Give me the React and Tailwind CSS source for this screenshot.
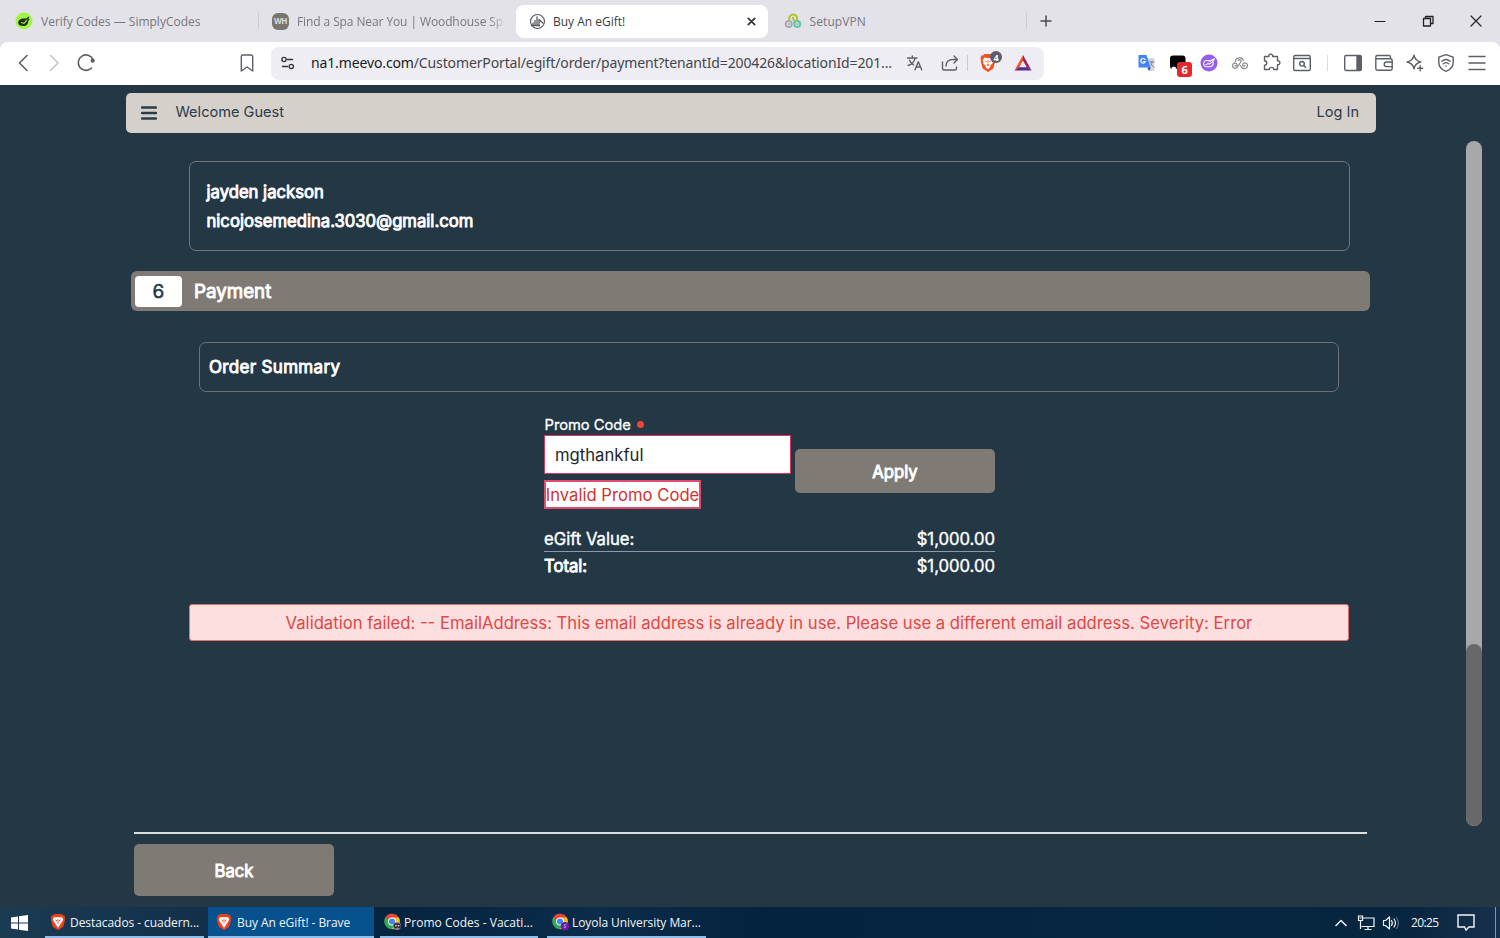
import React from "react";

function Icon({ w = 20, h = 20, className = "", children }) {
  return (
    <svg
      width={w}
      height={h}
      viewBox={`0 0 ${w} ${h}`}
      fill="none"
      stroke="currentColor"
      strokeWidth="1.4"
      strokeLinecap="round"
      strokeLinejoin="round"
      className={"block shrink-0 " + className}
    >
      {children}
    </svg>
  );
}

const gauge = (
  <g stroke="none">
    <path d="M3.200 11c0-2.800 2.300-4.500 5.300-4.500h2.500L14.500 4l-1 3 1.300.3-1.500 1.700c0 3-2 5-5 5-3.200 0-5.100-1.200-5.100-3z" fill="#20301a" />
    <path d="M6.500 10.500l2.300 1L12 7.800" stroke="#8fdc3c" strokeWidth="1.200" fill="none" />
  </g>
);

function VpnMark({ colored }) {
  const a = colored ? "#b4c02c" : "#86888c";
  const b = colored ? "#a9adb0" : "#86888c";
  const c = colored ? "#5cc8a0" : "#86888c";
  return (
    <Icon w={18} h={18}>
      {colored ? (
        <g strokeWidth="2">
          <path d="M5.500 7.500a4 3.600 0 1 1 7.200.5" stroke={a} />
          <path d="M9 5.800l1.500 4" stroke={a} />
          <circle cx="4.700" cy="12" r="3" stroke={b} />
          <circle cx="13.200" cy="12" r="3" stroke={c} />
          <circle cx="4.700" cy="12" r="0.500" stroke={b} strokeWidth="1" />
          <circle cx="13.200" cy="12" r="0.500" stroke={c} strokeWidth="1" />
        </g>
      ) : (
        <g strokeWidth="1.200" stroke={a}>
          <path d="M4.500 7.500C4.500 3 11 2.500 12.500 6.500" />
          <path d="M7.300 6.500c1.200-1.500 3.200-.5 2.700 1L6.500 13c-1.300 2-5 1.500-5-1.300 0-3 4-3.500 4.600-1 .3 1.500-1.900 2-2.100.6" />
          <path d="M9.300 11.500l1.500 2c1.800 2 5.700 1.200 5.700-1.800 0-3.200-4.300-3.700-4.800-1-.3 1.600 2 2 2.200.6" />
        </g>
      )}
    </Icon>
  );
}

function BraveLion({ className = "" }) {
  return (
    <Icon w={16} h={20} className={className}>
      <g stroke="none">
        <path d="M4.500 1h7l1.500 1.500 1.500-.2L15.500 5l-.5 2 .3 1-2 7.500L8 19l-5.300-3.500L.7 8 1 7 .5 5l1-2.700L3 2.500z" fill="#f4511e" />
        <path d="M4.500 4.500L8 5.200l3.500-.7 1.800 2.200-.8 2 .3 1.300-2.600 2.600.3 1.200L8 16.300l-2.500-2 .3-1.200L3.200 10.500l.3-1.300-.8-2z" fill="#fff" />
        <path d="M4.500 7.500l2.300.5-.3 1.200zM11.500 7.500l-2.300.5.3 1.200zM6.300 12l1.700-.9 1.700.9L8 13zM7.600 7.500h.8v3h-.8z" fill="#f4511e" />
      </g>
    </Icon>
  );
}

function BraveTaskIcon() {
  return (
    <Icon w={16} h={18}>
      <g stroke="none">
        <path d="M4.500 1h7L13 2.300l1.200-.1 1 2.300-.4 1.800.2.900-1.800 6.600L8 17.200l-5.200-3.400L1 7.200l.2-.9-.4-1.800 1-2.300 1.200.1z" fill="#e8431c" />
        <path d="M4 4.200h8l1.200 2-.7 1.800-2.300 3.500L8 15l-2.200-3.500L3.500 8l-.7-1.800z" fill="#fff" />
        <path d="M5 6.500L7 7.200l-.4 1.500zM11 6.500L9 7.200l.4 1.500zM7.600 6h.8v4.300L8 12l-.4-1.700z" fill="#e8431c" />
      </g>
    </Icon>
  );
}

function ChromeMark({ variant }) {
  return (
    <Icon w={18} h={18}>
      <g stroke="none">
        <circle cx="8" cy="8.500" r="7.800" fill="#34a853" />
        <path d="M8 8.500L1.250 4.600A7.800 7.800 0 0 1 14.750 4.600z" fill="#ea4335" />
        <path d="M8 4.600h6.750A7.800 7.800 0 0 1 8 16.300l3.400-5.850z" fill="#fbc116" />
        <circle cx="8" cy="8.500" r="3.900" fill="#fff" />
        <circle cx="8" cy="8.500" r="3.100" fill="#4285f4" />
        {variant === "purple" ? (
          <>
            <circle cx="13" cy="13.300" r="4.300" fill="#6a1fa0" />
            <path d="M14 11.700c-1.800-.7-2.500.8-1 1.400s.8 2-1 1.300" fill="none" stroke="#d9b8ef" strokeWidth="0.800" />
          </>
        ) : (
          <>
            <circle cx="13" cy="13" r="4" fill="#8d8494" />
            <path d="M9.500 12l1.500-1.800h4L16.500 12l.5 2.200-1.500 1.300-2-1-2 1-1.500-1.300z" fill="#31293a" />
            <circle cx="12" cy="12.800" r="0.800" fill="#fff" />
            <circle cx="14.500" cy="12.800" r="0.800" fill="#fff" />
          </>
        )}
      </g>
    </Icon>
  );
}

function TabStrip() {
  return (
    <div className="flex h-[42px] w-full bg-[#e3e2e8] text-[12px] text-[#77777d] font-['Open_Sans','Noto_Sans',sans-serif]">
      <div className="flex h-full w-[258px] items-center pl-[15px]">
        <Icon w={18} h={18} className="mr-2">
          <circle cx="9" cy="9" r="8.500" fill="#a3f54a" stroke="none" />
          {gauge}
        </Icon>
        <span className="mt-px whitespace-nowrap">Verify Codes — SimplyCodes</span>
      </div>
      <div className="my-[13px] w-px bg-[#cccbd2]" />
      <div className="flex h-full w-[257px] items-center pl-[13px]">
        <div className="mr-2 flex h-[17px] w-[17px] items-center justify-center rounded-[6px] bg-[#77756d] text-[8px] font-bold tracking-[-0.5px] text-[#dcdcd8]">WH</div>
        <div className="mt-px w-[208px] whitespace-nowrap tracking-[-0.1px] [mask-image:linear-gradient(to_right,#000_92%,transparent_101%)]">
          Find a Spa Near You | Woodhouse Sp
        </div>
      </div>
      <div className="mt-[5px] flex h-[33px] w-[252px] items-center rounded-[8px] bg-white pl-[13px] pr-[10px] text-[#3b3b40]">
        <Icon w={17} h={17} className="mr-[7px] text-[#55585c]">
          <circle cx="8.500" cy="8.500" r="7" strokeWidth="1.100" />
          <path d="M4 12V9.500M6 12.500V7M8 12.500V3.500M10 13V6.500l4.500 4M2 12.500h9" strokeWidth="1.300" strokeLinecap="butt" />
        </Icon>
        <span className="flex-1 whitespace-nowrap">Buy An eGift!</span>
        <Icon w={13} h={13} className="text-[#333]">
          <path d="M3.300 3.300l6.400 6.400M9.700 3.300l-6.400 6.400" strokeWidth="1.700" />
        </Icon>
      </div>
      <div className="flex h-full w-[258px] items-center pl-[16px]">
        <VpnMark colored />
        <span className="ml-[7.500px] mt-px tracking-[0.1px]">SetupVPN</span>
      </div>
      <div className="my-[13px] w-px bg-[#cccbd2]" />
      <div className="flex items-center pl-3 text-[#4b4b50]">
        <Icon w={14} h={14}>
          <path d="M7 2v10M2 7h10" strokeWidth="1.500" />
        </Icon>
      </div>
      <div className="ml-auto flex items-center text-[#222]">
        <div className="flex w-12 justify-center">
          <Icon w={12} h={12}><path d="M1 6.500h10" strokeWidth="1.200" /></Icon>
        </div>
        <div className="flex w-12 justify-center">
          <Icon w={12} h={12}>
            <path d="M1.500 3.500h7V11h-7zM3.500 3.500V1.500h7.500v7H8.500" strokeWidth="1.300" />
          </Icon>
        </div>
        <div className="flex w-12 justify-center">
          <Icon w={12} h={12}><path d="M1 1l10 10M11 1L1 11" strokeWidth="1.200" /></Icon>
        </div>
      </div>
    </div>
  );
}

function ExtensionButtons() {
  const cell = "relative flex w-[31.2px] shrink-0 justify-center";
  return (
    <div className="flex h-full items-center text-[#5d5f66]">
      <div className={cell}>
        <Icon w={18} h={18}>
          <g stroke="none">
            <path d="M7 4h9.500v13H10z" fill="#d5d9de" />
            <path d="M0.500 1h8l4 12.500H0.500z" fill="#4285f4" />
            <path d="M9.500 13.500H13L11 17z" fill="#2a56b5" />
          </g>
          <path d="M7 5.500A2.300 2.300 0 1 0 7.300 7.500H5.500" stroke="#fff" strokeWidth="1.200" />
          <path d="M11.500 8H16M14 7v1c0 2-1 3-2 4M13 10l3 3.500" stroke="#7b8794" strokeWidth="1" />
        </Icon>
      </div>
      <div className={cell}>
        <Icon w={18} h={18}>
          <rect x="1" y="1.500" width="15.500" height="13.500" rx="3" fill="#050505" stroke="none" />
          <path d="M2.500 15c0-3.500 4.500-3.500 5 0zM8 15c0-3.500 4.500-3.500 5 0z" fill="#fff" stroke="none" />
        </Icon>
        <div className="absolute left-[15px] top-[8px] flex h-[15px] w-[15px] items-center justify-center rounded-[3px] bg-[#e5282c] text-[11px] font-bold leading-none text-white font-['Open_Sans',sans-serif]">6</div>
      </div>
      <div className={cell}>
        <Icon w={18} h={18}>
          <circle cx="9" cy="9" r="8.500" fill="#925ff0" stroke="none" />
          <path d="M10.500 6.500H7C4.500 6.500 3.300 8.500 3.700 10.500c.3 1.600 1.500 2.300 3.300 2.300h2.500c2.500 0 3.800-1.500 3.700-4.300M9 7.500l5.500-2.800-2 3-3 2.500-2-1M6 10.500h1" stroke="#fff" strokeWidth="1.100" />
        </Icon>
      </div>
      <div className={cell}><VpnMark /></div>
      <div className={cell}>
        <Icon>
          <path d="M3 4h4.300c-.5-3 4.400-3 3.900 0H16v4.300c3.200-.4 3.200 4.300 0 3.900V17h-3.800c0-2.800-4.400-2.800-4.400 0H3v-4.300c3 0 3-4.400 0-4.400z" transform="translate(0.500 -0.500)" />
        </Icon>
      </div>
      <div className={cell}>
        <Icon>
          <rect x="1.700" y="2.500" width="16.600" height="15" rx="1.500" />
          <path d="M2 5.500h16M11.700 12.500l2 2" />
          <circle cx="10" cy="10.800" r="2.300" />
        </Icon>
      </div>
      <div className="mx-[9px] h-4 w-px bg-[#d9d9de]" />
      <div className={cell}>
        <Icon>
          <rect x="1.700" y="2.500" width="16.600" height="15" rx="1.500" />
          <path d="M14 3h3a1 1 0 0 1 1 1v12a1 1 0 0 1-1 1h-3z" fill="currentColor" />
        </Icon>
      </div>
      <div className={cell}>
        <Icon>
          <path d="M16.500 5.700V4.200A1.700 1.700 0 0 0 14.800 2.500H3.500A1.700 1.700 0 0 0 1.800 4.200v11.300a1.700 1.700 0 0 0 1.700 1.700h13a1.700 1.700 0 0 0 1.700-1.700V7.400a1.700 1.700 0 0 0-1.700-1.700H2" />
          <path d="M18 9h-5.500a2.300 2.300 0 0 0 0 4.600H18" />
        </Icon>
      </div>
      <div className={cell}>
        <Icon>
          <path d="M9 2.200c.7 4 2.300 5.800 6.700 6.800-4.400 1-6 2.800-6.700 6.800C8.300 11.800 6.500 10 2 9c4.500-1 6.300-2.800 7-6.800z" />
          <path d="M15.200 12.700v5M12.700 15.200h5" />
        </Icon>
      </div>
      <div className={cell}>
        <Icon>
          <path d="M10 1.700l7.200 2.500v5.300c0 4.300-3 7.200-7.200 8.800-4.200-1.600-7.200-4.500-7.200-8.800V4.200z" />
          <path d="M5.800 8.300c2.500-2.100 5.900-2.100 8.400 0M7.400 10.700c1.600-1.300 3.600-1.300 5.200 0" />
          <circle cx="10" cy="13" r="0.800" fill="currentColor" stroke="none" />
        </Icon>
      </div>
      <div className={cell}>
        <Icon>
          <path d="M1.500 3.500h17M1.500 10h17M1.500 16.500h17" strokeWidth="1.500" strokeLinecap="butt" />
        </Icon>
      </div>
    </div>
  );
}

function Toolbar() {
  return (
    <div className="bg-[#e3e2e8]">
      <div className="flex h-[43px] w-full items-center rounded-t-[8px] bg-white pb-px pr-[7px] text-[#5d5f66]">
        <div className="flex pl-[13px]">
          <Icon className="mr-[11px]"><path d="M14 2.500L6.500 10l7.500 7.500" strokeWidth="1.600" /></Icon>
          <Icon className="mr-[12px] text-[#c3c4c8]"><path d="M6.500 2.500L14 10l-7.500 7.500" strokeWidth="1.600" /></Icon>
          <Icon>
            <path d="M15.500 15A7.700 7.700 0 1 1 17 6.500" strokeWidth="1.600" />
            <circle cx="16.700" cy="7.700" r="2.100" fill="currentColor" stroke="none" />
          </Icon>
        </div>
        <Icon className="ml-[141px]">
          <path d="M4.300 3.500a1.500 1.500 0 0 1 1.500-1.500h8.400a1.500 1.500 0 0 1 1.500 1.500V18L10 14l-5.700 4z" />
        </Icon>
        <div className="ml-[14px] flex h-[33px] w-[773px] items-center rounded-[8px] bg-[#eeedf3]">
          <Icon w={16} h={16} className="ml-[9px] text-[#34363b]">
            <circle cx="4" cy="4.500" r="2.100" />
            <path d="M7.500 4.500h5M2.500 11.500h5" />
            <circle cx="11.300" cy="11.500" r="2.100" />
          </Icon>
          <div className="ml-[15px] w-[588px] whitespace-nowrap pb-[2px] text-[14px] text-[#44464c] tracking-[-0.130px] font-['Noto_Sans','Open_Sans',sans-serif]">
            <span className="text-[#1b1c20]">na1.meevo.com</span>/CustomerPortal/egift/order/payment?tenantId=200426&amp;locationId=201...
          </div>
          <Icon w={18} h={18} className="ml-[7px]">
            <path d="M1.500 4h9.500M6.300 2v2M3.500 6.300c1 2.200 2.500 3.700 4 4.500M9 4.300c-.7 3-3.300 6-6.800 7.200M9 15.800l3.300-8 3.400 8M10.300 13h4" strokeWidth="1.400" />
          </Icon>
          <Icon w={18} h={18} className="ml-[17px]">
            <path d="M1.500 8v6.500a1.500 1.500 0 0 0 1.500 1.500h11a1.500 1.500 0 0 0 1.500-1.500V13M5 12c0-4 2.500-6.500 7-6.500h4M13 2l3.500 3.500L13 9" />
          </Icon>
          <div className="ml-[8px] h-4 w-px bg-[#c9c8cf]" />
          <div className="relative ml-[12px]">
            <BraveLion />
            <div className="absolute left-[10px] top-[-2px] flex h-[12px] w-[12px] items-center justify-center rounded-full bg-[#5c5e6b] text-[9px] font-bold leading-none text-white font-['Open_Sans',sans-serif]">4</div>
          </div>
          <Icon w={18} h={18} className="ml-[18px]">
            <g stroke="none">
              <path d="M9 1L0.500 16.500l4.500-2.800L9 6.500z" fill="#f4512c" />
              <path d="M9 1l8.500 15.500-4.500-2.800L9 6.500z" fill="#a01f62" />
              <path d="M.5 16.500h17L13 13.300H5z" fill="#5b2d91" />
            </g>
          </Icon>
        </div>
        <div className="ml-auto h-full"><ExtensionButtons /></div>
      </div>
    </div>
  );
}

const fauxBold = "[-webkit-text-stroke:0.9px_currentColor]";

function Page() {
  return (
    <div className="flex h-[822px] w-full flex-col bg-[#233745] font-['Inter',sans-serif] text-white">
      <div className="ml-[125.500px] mt-[8px] flex h-[40px] w-[1250px] shrink-0 items-center rounded-[5px] bg-[#d5d0ca] pl-[15.500px] pr-[16.500px] text-[14.580px] text-[#2b3c4a]">
        <Icon w={16} h={16} className="mr-[18.500px]">
          <path d="M1 2.500h14M1 8h14M1 13.500h14" strokeWidth="2.400" />
        </Icon>
        <span className="pb-px">Welcome Guest</span>
        <span className="ml-auto pb-px">Log In</span>
      </div>
      <div className="flex flex-1">
        <div className="flex w-[1466px] flex-col pt-[28px]">
          <div className={"ml-[189px] h-[89.500px] w-[1160.500px] rounded-[7px] border border-[#74777a] pl-[16.500px] pt-[16px] text-[16.670px] leading-[29px] " + fauxBold}>
            <div><span>jayden jackson</span></div>
            <div><span>nicojosemedina.3030@gmail.com</span></div>
          </div>
          <div className="ml-[131px] mt-[20.500px] flex h-[40px] w-[1239px] items-center rounded-[6px] bg-[#7f7b74] pl-[4px]">
            <div className="flex h-[31px] w-[47px] items-center justify-center rounded-[4px] bg-white pt-[3px] text-[19px] text-[#233745] [-webkit-text-stroke:0.5px_currentColor]">6</div>
            <span className={"ml-[12px] pt-[3px] text-[18.750px] " + fauxBold}>Payment</span>
          </div>
          <div className={"ml-[199px] mt-[31px] flex h-[50px] w-[1140px] items-center rounded-[7px] border border-[#6d7276] pl-[9px] pt-[2px] text-[17px] tracking-[0.320px] " + fauxBold}>
            Order Summary
          </div>
          <div className="ml-[544px] mt-[22px] flex w-[451px] flex-col">
            <div className="flex">
              <div className="w-[247px]">
                <div className="flex h-[21px] items-center pl-[0.500px] text-[14.700px] [-webkit-text-stroke:0.3px_currentColor]">
                  <span className="pt-px">Promo Code</span>
                  <span className="ml-[6px] h-[7px] w-[7px] rounded-full bg-[#f04438]" />
                </div>
                <div className="flex h-[39px] items-center border border-[#dc3560] bg-white pl-[10px] pt-px text-[16.670px] text-[#212529]">mgthankful</div>
                <div className="mt-[6px] flex h-[28.500px] w-[157px] items-center justify-center whitespace-nowrap border-2 border-[#e14a6e] bg-white pt-[2px] text-[16.670px] text-[#d3332e]">Invalid Promo Code</div>
              </div>
              <div className={"ml-[4px] mt-[35px] flex h-[44px] w-[200px] items-center justify-center rounded-[5px] bg-[#7f7b74] pt-[3px] text-[16.670px] " + fauxBold}>Apply</div>
            </div>
            <div className="mt-[17.500px] flex h-[26px] items-center justify-between border-b border-[#8d98ab] pt-[2px] text-[16.670px] [-webkit-text-stroke:0.4px_currentColor]">
              <span>eGift Value:</span>
              <span>$1,000.00</span>
            </div>
            <div className="flex h-[26px] items-center justify-between pt-[2px] text-[16.670px] [-webkit-text-stroke:0.4px_currentColor]">
              <span className={fauxBold}>Total:</span>
              <span>$1,000.00</span>
            </div>
          </div>
          <div className="ml-[189px] mt-[26px] flex h-[37px] w-[1160px] items-center justify-center whitespace-nowrap rounded-[3px] border border-[#e6706f] bg-[#fddfe0] pt-px text-[16.670px] text-[#e24744]">
            <span>Validation failed: -- EmailAddress: This email address is already in use. Please use a different email address. Severity: Error</span>
          </div>
          <div className="ml-[134px] mt-[191px] h-[2px] w-[1233px] bg-[#dcdddd]" />
          <div className={"ml-[134px] mt-[10px] flex h-[52px] w-[200px] items-center justify-center rounded-[5px] bg-[#7f7b74] pt-[3px] text-[16.670px] " + fauxBold}>Back</div>
        </div>
        <div className="mt-[8px] flex h-[685px] w-[16px] flex-col justify-end overflow-hidden rounded-full bg-[#a8a8a8]">
          <div className="h-[182px] rounded-full bg-[#686868]" />
        </div>
      </div>
    </div>
  );
}

function Taskbar() {
  const item = "flex h-full items-center border-b-2 border-[#8dbfe9] whitespace-nowrap tracking-[-0.06px]";
  return (
    <div className="flex h-[31px] w-full items-center bg-[linear-gradient(90deg,#1b3b52_0px,#12304a_200px,#042440_376px,#0b2c4a_600px,#04233e_760px,#062742_1200px,#06253f_1400px,#17304d_1500px)] text-[12px] text-[#f2f5f8] font-['Open_Sans','Noto_Sans',sans-serif]">
      <Icon w={18} h={18} className="ml-[10px] mr-[17px]">
        <path d="M1 3.500l7-1v6H1zM9 2.300L18 1v7.500H9zM1 9.500h7v6l-7-1zM9 9.500h9V17l-9-1.300z" fill="#fff" stroke="none" />
      </Icon>
      <div className={item + " w-[159px] pl-[5px]"}>
        <BraveTaskIcon />
        <span className="ml-[4px] pt-[2px]">Destacados - cuadern...</span>
      </div>
      <div className={item + " ml-[4px] w-[166px] bg-[#05508d] pl-[8px]"}>
        <BraveTaskIcon />
        <span className="ml-[5px] pt-[2px]">Buy An eGift! - Brave</span>
      </div>
      <div className={item + " ml-[6px] w-[158px] pl-[4px]"}>
        <ChromeMark />
        <span className="ml-[2px] pt-[2px] tracking-[0.02px]">Promo Codes - Vacati...</span>
      </div>
      <div className={item + " ml-[9px] w-[159px] pl-[5px]"}>
        <ChromeMark variant="purple" />
        <span className="ml-[2px] pt-[2px]">Loyola University Mar...</span>
      </div>
      <div className="ml-auto flex h-full items-center">
        <Icon w={14} h={14}><path d="M1.500 10L7 4.500 12.500 10" strokeLinecap="butt" strokeWidth="1.500" /></Icon>
        <Icon w={18} h={18} className="ml-[9px]">
          <path d="M6 4h11v8.500H4.500M11 12.500V15M7.500 15.500h7M1.500 2h4v4.500h-4zM3.500 6.500V15M2.500 4h2" strokeWidth="1.200" strokeLinejoin="miter" strokeLinecap="butt" />
        </Icon>
        <Icon w={18} h={18} className="ml-[7px]">
          <path d="M1.500 6.500h2L7.500 3v12l-4-3.500h-2zM9.500 6.500c1 1.500 1 3.500 0 5M12 5c1.800 2.500 1.800 5.500 0 8" strokeWidth="1.200" />
          <path d="M14.500 3.500c2.500 3.500 2.500 7.500 0 11" stroke="#5d7488" strokeWidth="1.100" />
        </Icon>
        <span className="ml-[11px] w-[29px] whitespace-nowrap tracking-[-0.6px]">20:25</span>
        <Icon w={18} h={18} className="ml-[17px]">
          <path d="M1 1h16v12h-5L9 16l-1.500-3H1z" strokeWidth="1.400" strokeLinejoin="miter" />
        </Icon>
        <div className="ml-[20px] mr-[4px] h-full w-px bg-[#8495a5]" />
      </div>
    </div>
  );
}

export default function App() {
  return (
    <div className="flex h-[938px] w-[1500px] flex-col overflow-hidden bg-[#233745]">
      <TabStrip />
      <Toolbar />
      <Page />
      <Taskbar />
    </div>
  );
}
